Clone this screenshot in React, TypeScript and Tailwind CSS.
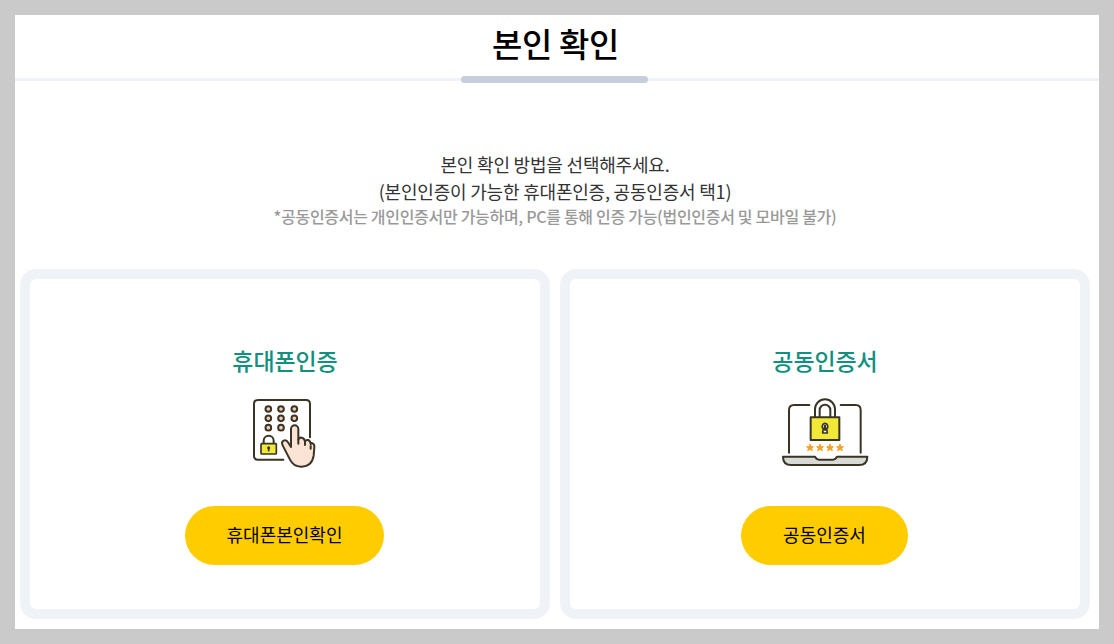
import React from 'react'

const font = "font-['Noto_Sans_CJK_KR','Noto_Sans',sans-serif]"

const PhoneIcon = () => (
  <svg width="100" height="85" viewBox="0 0 300 255" fill="none" stroke="#3a3425" strokeWidth="6" strokeLinecap="round" strokeLinejoin="round" className="mr-[10px]">
    <path d="M160 224H84q-12 0-12-12V57q0-12 12-12h144q12 0 12 12v100" />
    {[72, 100, 128].map((y) =>
      [115, 153, 193].map((x) =>
        y === 128 && x === 193 ? null : <circle key={`${x}-${y}`} cx={x} cy={y} r="8.5" fill="#f6cdb6" strokeWidth="6" />,
      ),
    )}
    <path d="M101 176v-9a15 15 0 0 1 30 0v9" strokeWidth="6" />
    <rect x="93" y="176" width="46" height="31" rx="2" fill="#f2e936" strokeWidth="5" />
    <circle cx="116" cy="188" r="4.5" fill="#3a3425" stroke="none" />
    <rect x="113.5" y="189" width="5" height="10" fill="#3a3425" stroke="none" />
    <path
      d="M183 132a11 11 0 0 1 22 0v32q2-7 10-6 9 1 10 12 2-6 9-5 7 2 8 12 2-4 6-2 6 3 5 12l-2 25q-5 32-36 33-24 1-35-21l-22-43q-5-10 3-14 8-4 14 6l8 13Z"
      fill="#fbe3d6"
    />
    <path d="M205 164v12M225 170v10M242 183v8" />
  </svg>
)

const LaptopIcon = () => (
  <svg width="110" height="85" viewBox="0 0 330 255" fill="none" stroke="#3a3425" strokeWidth="6" strokeLinecap="round" strokeLinejoin="round">
    <path d="M57 188V60q0-15 15-15h46M212 45h45q15 0 15 15v128" />
    <path d="M135 82V58a30 30 0 0 1 60 0v24M149 82V60a16 16 0 0 1 32 0v22" />
    <rect x="122" y="82" width="86" height="68" fill="#f2e936" />
    <path d="M165 100a9 9 0 0 1 5 16l2 13h-14l2-13a9 9 0 0 1 5-16Z" fill="#fff" strokeWidth="5" />
    <path d="M165 108v11" strokeWidth="7" />
    {[120, 150, 180, 210].map((x) => (
      <path key={x} d="M0-10 3-3 10-3 5 2 7 9 0 5-7 9-5 2-10-3-3-3Z" transform={`translate(${x} 173)`} fill="#f7a02c" stroke="#f7a02c" strokeWidth="3" />
    ))}
    <path d="M39 200h96q4 9 12 9h42q8 0 12-9h91q0 25-25 25H64q-25 0-25-25Z" fill="#d9d9d6" />
  </svg>
)

const Card = ({ title, button, btnWidth, icon, iconPad }: { title: string; button: string; btnWidth: string; icon: React.ReactNode; iconPad: string }) => (
  <div className="flex h-[350px] w-[530px] flex-col items-center rounded-[16px] border-[10px] border-[#eff2f7] bg-white pt-[63px]">
    <h3 className="h-[36px] text-[23px] leading-[36px] font-medium tracking-[-0.1px] text-[#12907f]">{title}</h3>
    <div className={`mt-[7px] flex h-[90px] items-start justify-center ${iconPad}`}>{icon}</div>
    <button className={`mt-[31px] mr-px h-[59px] rounded-full bg-[#ffcc00] pb-[2px] text-[18px] text-black ${btnWidth}`}>{button}</button>
  </div>
)

export default function App() {
  return (
    <div className={`h-[644px] w-[1114px] overflow-hidden bg-[#cacaca] p-[15px] ${font}`}>
      <div className="h-[614px] bg-white">
        <div className="relative h-[66px] border-b-[3px] border-[#eff2f7] pr-[3px] text-center">
          <h1 className="text-[33px] leading-[56px] font-medium tracking-[-0.4px] text-black">본인 확인</h1>
          <div className="absolute top-[61px] left-[446px] h-[7px] w-[187px] rounded-full bg-[#c6cddb]"></div>
        </div>
        <div className="mt-[70px] flex flex-col items-center pr-[4px] text-[18px] leading-[27px] tracking-[-0.2px] text-[#333333]">
          <p>본인 확인 방법을 선택해주세요.</p>
          <p>(본인인증이 가능한 휴대폰인증, 공동인증서 택1)</p>
          <p className="text-[16px] leading-[23px] font-medium tracking-[-0.3px] text-[#999999]">*공동인증서는 개인인증서만 가능하며, PC를 통해 인증 가능(법인인증서 및 모바일 불가)</p>
        </div>
        <div className="mt-[41px] flex justify-between px-[5px] pr-[9px]">
          <Card title="휴대폰인증" button="휴대폰본인확인" btnWidth="w-[199px]" iconPad="" icon={<PhoneIcon />} />
          <Card title="공동인증서" button="공동인증서" btnWidth="w-[167px]" iconPad="pt-[5px]" icon={<LaptopIcon />} />
        </div>
      </div>
    </div>
  )
}
